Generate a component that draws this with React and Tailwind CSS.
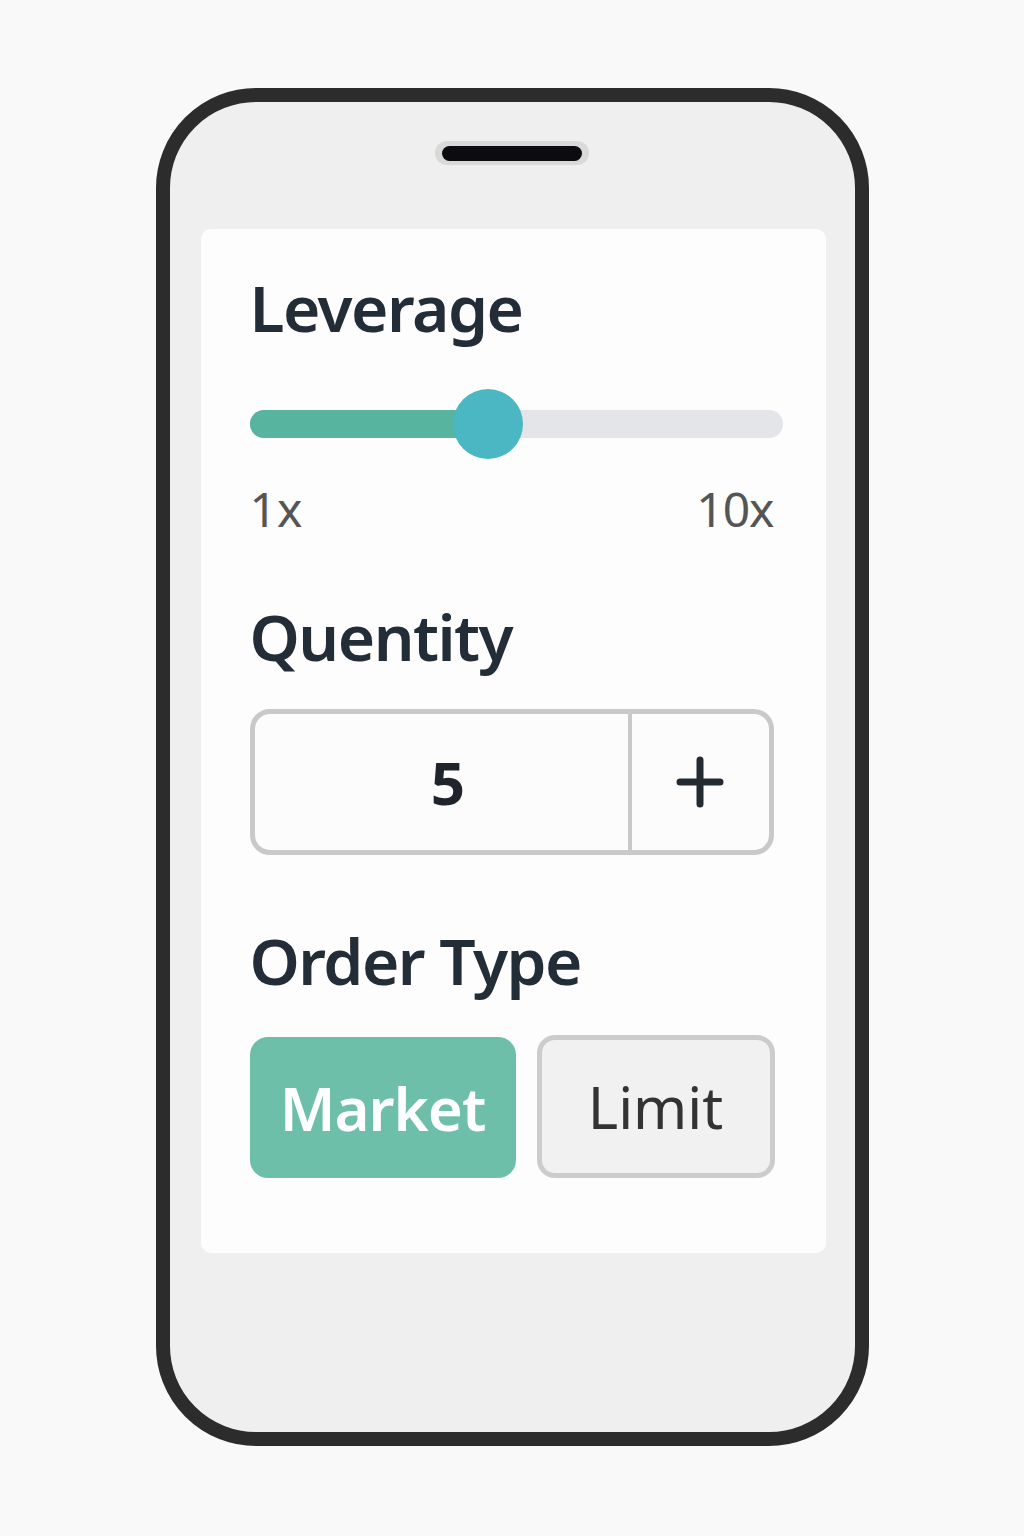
import React, { useState } from 'react';

const FONT = { fontFamily: '"Noto Sans", "Open Sans", sans-serif' };

const Heading = ({ children, className = '' }) => (
  <h2 className={`text-[64px] leading-none font-semibold tracking-[-1.5px] text-[#232d37] ${className}`}>
    {children}
  </h2>
);

const LeverageSlider = ({ value }) => {
  // value 0..1 along the track
  const pct = `${value * 100}%`;
  return (
    <div className="relative h-[70px] flex items-center">
      <div className="relative w-full h-[28px] rounded-full bg-[#e3e5e9] overflow-hidden">
        <div className="h-full bg-[#56b49f]" style={{ width: pct }} />
      </div>
      <div
        className="absolute top-0 w-[70px] h-[70px] -ml-[35px] rounded-full bg-[#4bb7c2]"
        style={{ left: pct }}
      />
    </div>
  );
};

export default function App() {
  const [qty, setQty] = useState(5);
  const [orderType, setOrderType] = useState('market');

  return (
    <div className="min-h-[1536px] bg-[#f9f9f9] pt-[88px]" style={FONT}>
      {/* phone body */}
      <div className="mx-auto w-[713px] h-[1358px] rounded-[100px] border-[14px] border-[#2c2c2c] bg-[#efefef] flex flex-col items-center overflow-hidden">
        {/* speaker */}
        <div className="mt-[39px] w-[154px] h-[24px] rounded-full bg-[#d9d9d9] flex items-center justify-center">
          <div className="w-[140px] h-[15px] rounded-full bg-[#0c0c10]" />
        </div>

        {/* settings card */}
        <div className="mt-[64px] ml-[2px] w-[625px] h-[1024px] rounded-[10px] bg-[#fdfdfd] pl-[49px] pr-[43px] pt-[47px]">
          <Heading>Leverage</Heading>

          <div className="mt-[49px]">
            <LeverageSlider value={0.447} />
          </div>

          <div className="mt-[26px] flex justify-between pr-[9px] text-[48px] leading-none text-[#555555]">
            <span>1x</span>
            <span className="tracking-[-1px]">10x</span>
          </div>

          <Heading className="mt-[72px]">Quentity</Heading>

          <div className="mt-[40px] w-[524px] h-[146px] rounded-[20px] border-[5px] border-[#c9c9c9] bg-[#fcfcfc] flex overflow-hidden">
            <div className="flex-1 flex items-center justify-center pl-[14px] text-[60px] font-bold text-[#1f252b]">
              {qty}
            </div>
            <button
              className="w-[141px] border-l-[4px] border-[#c9c9c9] flex items-center justify-center text-[#232a31]"
              onClick={() => setQty(qty + 1)}
            >
              <svg width="48" height="52" viewBox="0 0 48 52">
                <path d="M24 4v44M4 26h40" stroke="currentColor" strokeWidth="7" strokeLinecap="round" />
              </svg>
            </button>
          </div>

          <Heading className="mt-[74px]">Order Type</Heading>

          <div className="mt-[44px] flex gap-[21px] w-[525px]">
            <button
              onClick={() => setOrderType('market')}
              className={`w-[266px] h-[141px] rounded-[18px] text-[60px] tracking-[-1px] ${
                orderType === 'market'
                  ? 'bg-[#6dbfa9] text-white font-semibold'
                  : 'bg-[#f1f1f1] border-[5px] border-[#cccccc] text-[#333333]'
              }`}
            >
              Market
            </button>
            <button
              onClick={() => setOrderType('limit')}
              className={`flex-1 h-[143px] -mt-[2px] rounded-[18px] text-[58px] ${
                orderType === 'limit'
                  ? 'bg-[#6dbfa9] text-white font-semibold'
                  : 'bg-[#f1f1f1] border-[5px] border-[#cccccc] text-[#333333]'
              }`}
            >
              Limit
            </button>
          </div>
        </div>
      </div>
    </div>
  );
}
